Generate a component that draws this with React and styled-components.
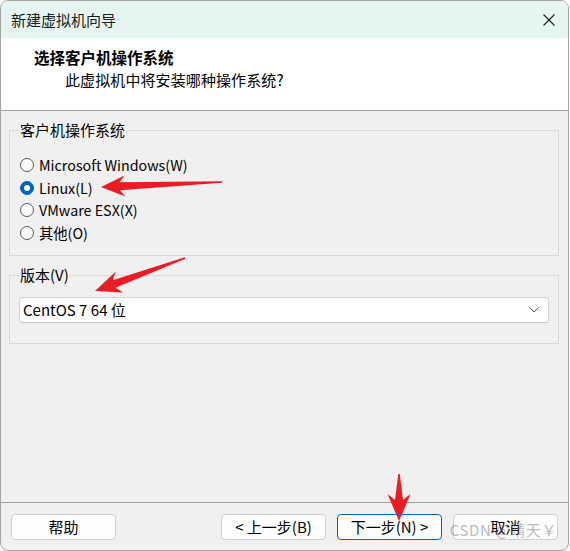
import React from 'react'
import styled, { createGlobalStyle } from 'styled-components'

const GlobalStyle = createGlobalStyle`
    html, body {
        margin: 0;
        padding: 0;
        background: #ffffff;
    }
    body {
        font-family: "Noto Sans CJK SC", "Noto Sans", sans-serif;
    }
`

const osList = [
    { id: 'win', label: 'Microsoft Windows(W)', checked: false },
    { id: 'linux', label: 'Linux(L)', checked: true },
    { id: 'esx', label: 'VMware ESX(X)', checked: false },
    { id: 'other', label: '其他(O)', checked: false },
]

// tapered annotation arrow, tail -> tip
const arrowPoints = (x1, y1, x2, y2, headLen, headW, tailW, neckW) => {
    const dx = x2 - x1
    const dy = y2 - y1
    const len = Math.hypot(dx, dy)
    const ux = dx / len
    const uy = dy / len
    const nx = -uy
    const ny = ux
    const at = (d, w) => [x2 - ux * d + nx * w, y2 - uy * d + ny * w]
    const pts = [
        [x1 + nx * tailW / 2, y1 + ny * tailW / 2],
        at(headLen * 0.78, neckW / 2),
        at(headLen, headW / 2),
        [x2, y2],
        at(headLen, -headW / 2),
        at(headLen * 0.78, -neckW / 2),
        [x1 - nx * tailW / 2, y1 - ny * tailW / 2],
    ]
    return pts.map(p => p.map(v => v.toFixed(1)).join(',')).join(' ')
}

const arrows = [
    { id: 1, from: [222, 182], to: [101, 187], head: 24, width: 21, tail: 1.5, neck: 8 },
    { id: 2, from: [185, 258], to: [95, 291], head: 26, width: 22, tail: 1.5, neck: 8 },
    { id: 3, from: [399, 474], to: [399, 521], head: 27, width: 23, tail: 1.5, neck: 8 },
]

const App = () => {
    return (
        <>
            <GlobalStyle />
            <Window>
                <TitleBar>
                    <span>新建虚拟机向导</span>
                    <CloseIcon viewBox="0 0 12 12">
                        <path d="M0.5 0.5 L11.5 11.5 M11.5 0.5 L0.5 11.5" />
                    </CloseIcon>
                </TitleBar>

                <Header>
                    <h2>选择客户机操作系统</h2>
                    <p>此虚拟机中将安装哪种操作系统?</p>
                </Header>

                <Body>
                    <Group $pad="15px 9px 11px">
                        <legend>客户机操作系统</legend>
                        {
                            osList.map(os => (
                                <RadioRow key={os.id}>
                                    <RadioDot $checked={os.checked} />
                                    <span>{os.label}</span>
                                </RadioRow>
                            ))
                        }
                    </Group>

                    <Group $pad="13px 9px 20px" $top="10px">
                        <legend>版本(V)</legend>
                        <Select>
                            <span>CentOS 7 64 位</span>
                            <svg viewBox="0 0 10 6" width="10" height="6">
                                <path d="M0.5 0.5 L5 5 L9.5 0.5" />
                            </svg>
                        </Select>
                    </Group>
                </Body>

                <Footer>
                    <Button>帮助</Button>
                    <Spacer />
                    <Button>&lt; 上一步(B)</Button>
                    <Button $primary>下一步(N) &gt;</Button>
                    <Button>取消</Button>
                </Footer>

                <Watermark>CSDN @晴天￥</Watermark>

                <Annotations viewBox="0 0 570 551">
                    {
                        arrows.map(a => (
                            <polygon
                                key={a.id}
                                points={arrowPoints(a.from[0], a.from[1], a.to[0], a.to[1], a.head, a.width, a.tail, a.neck)}
                            />
                        ))
                    }
                </Annotations>
            </Window>
        </>
    )
}


const Window = styled.div`
    position: relative;
    box-sizing: border-box;
    width: 569px;
    height: 551px;
    border: 1px solid #a4a4a4;
    border-radius: 8px;
    overflow: hidden;
    display: flex;
    flex-direction: column;
    background: #f0f0f0;
    color: #000000;
    font-size: 15px;
`

const TitleBar = styled.div`
    height: 37px;
    flex: none;
    display: flex;
    align-items: center;
    justify-content: space-between;
    padding: 0 13px 0 10px;
    background: #e5f6f2;
    color: #1a1a1a;
    line-height: 20px;
`

const CloseIcon = styled.svg`
    width: 12px;
    height: 12px;

    path {
        fill: none;
        stroke: #1c1c1c;
        stroke-width: 1.1;
    }
`

const Header = styled.header`
    box-sizing: border-box;
    height: 73px;
    flex: none;
    padding: 9px 0 0 33px;
    background: #ffffff;
    border-bottom: 1px solid #a0a0a0;

    h2 {
        margin: 0;
        font-size: 15.5px;
        font-weight: 700;
        line-height: 20px;
    }

    p {
        margin: 3px 0 0 31px;
        font-size: 15px;
        line-height: 20px;
        letter-spacing: 0.1px;
    }
`

const Body = styled.main`
    flex: 1;
    padding: 10px 9px 0 8px;
`

const Group = styled.fieldset`
    margin: ${p => p.$top || '0'} 0 0;
    padding: ${p => p.$pad};
    border: 1px solid #dadada;
    min-width: 0;

    legend {
        padding: 0 1px;
        font-size: 15px;
        line-height: 18px;
    }
`

const RadioRow = styled.label`
    height: 22.5px;
    display: flex;
    align-items: center;
    gap: 5px;
    padding-left: 1px;
    font-size: 14.3px;
    line-height: 20px;
`

const RadioDot = styled.span`
    box-sizing: border-box;
    width: 14px;
    height: 14px;
    border-radius: 50%;
    flex: none;
    display: grid;
    place-items: center;
    border: 1px solid ${p => p.$checked ? '#0067c0' : '#5a5a5a'};
    background: ${p => p.$checked ? '#0067c0' : '#fafafa'};

    &::after {
        content: '';
        width: 6px;
        height: 6px;
        border-radius: 50%;
        background: #ffffff;
        display: ${p => p.$checked ? 'block' : 'none'};
    }
`

const Select = styled.div`
    box-sizing: border-box;
    height: 26px;
    display: flex;
    align-items: center;
    justify-content: space-between;
    padding: 0 9px 0 3px;
    background: #ffffff;
    border: 1px solid #d4d4d4;
    border-bottom-color: #c4c4c4;
    border-radius: 3px;
    line-height: 20px;

    path {
        fill: none;
        stroke: #555555;
        stroke-width: 1;
    }
`

const Footer = styled.footer`
    box-sizing: border-box;
    height: 48px;
    flex: none;
    display: flex;
    align-items: flex-start;
    gap: 11px;
    padding: 11px 10px 0;
    border-top: 1px solid #a0a0a0;
`

const Spacer = styled.div`
    flex: 1;
`

const Button = styled.button`
    box-sizing: border-box;
    width: 105px;
    height: 26px;
    padding: 0;
    font-family: inherit;
    font-size: 15px;
    line-height: 20px;
    color: #000000;
    background: #fdfdfd;
    border: 1px solid ${p => p.$primary ? '#0067c0' : '#d0d0d0'};
    border-radius: 4px;
`

const Watermark = styled.div`
    position: absolute;
    right: 11px;
    bottom: 10px;
    font-size: 15px;
    line-height: 20px;
    letter-spacing: 0.6px;
    color: rgba(120, 120, 120, 0.5);
    pointer-events: none;
`

const Annotations = styled.svg`
    position: absolute;
    top: -1px;
    left: -1px;
    width: 570px;
    height: 551px;
    pointer-events: none;

    polygon {
        fill: #ec1c24;
    }
`


export default App
